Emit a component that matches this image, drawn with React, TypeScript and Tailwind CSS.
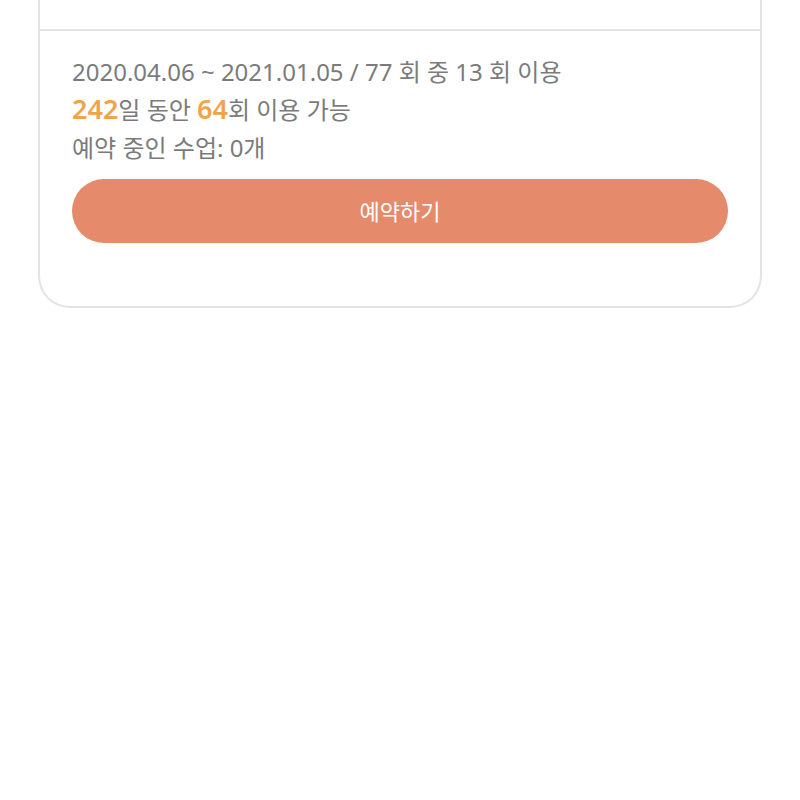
export default function App() {
  return (
    <div
      className="min-h-[800px] w-[800px] bg-white px-[38px]"
      style={{ fontFamily: '"Noto Sans", "Noto Sans CJK KR", sans-serif' }}
    >
      <div className="rounded-b-[32px] border-x-2 border-b-2 border-[#e3e3e3]">
        <div className="h-[31px] border-b-2 border-[#e3e3e3]" />
        <div className="px-[32px] pb-[63px] pt-[22px]">
          <div className="text-[24px] leading-[38px] text-[#7b7b7b]">
            <p>2020.04.06 ~ 2021.01.05 / 77 회 중 13 회 이용</p>
            <p className="h-[38px]">
              <span className="text-[27px] font-semibold leading-none text-[#f0a34c]">242</span>일 동안{" "}
              <span className="text-[27px] font-semibold leading-none text-[#f0a34c]">64</span>회 이용 가능
            </p>
            <p>예약 중인 수업: 0개</p>
          </div>
          <button className="mt-[12px] flex h-[64px] w-full items-center justify-center rounded-full bg-[#e58b6b] text-[22px] text-white">
            예약하기
          </button>
        </div>
      </div>
    </div>
  );
}
